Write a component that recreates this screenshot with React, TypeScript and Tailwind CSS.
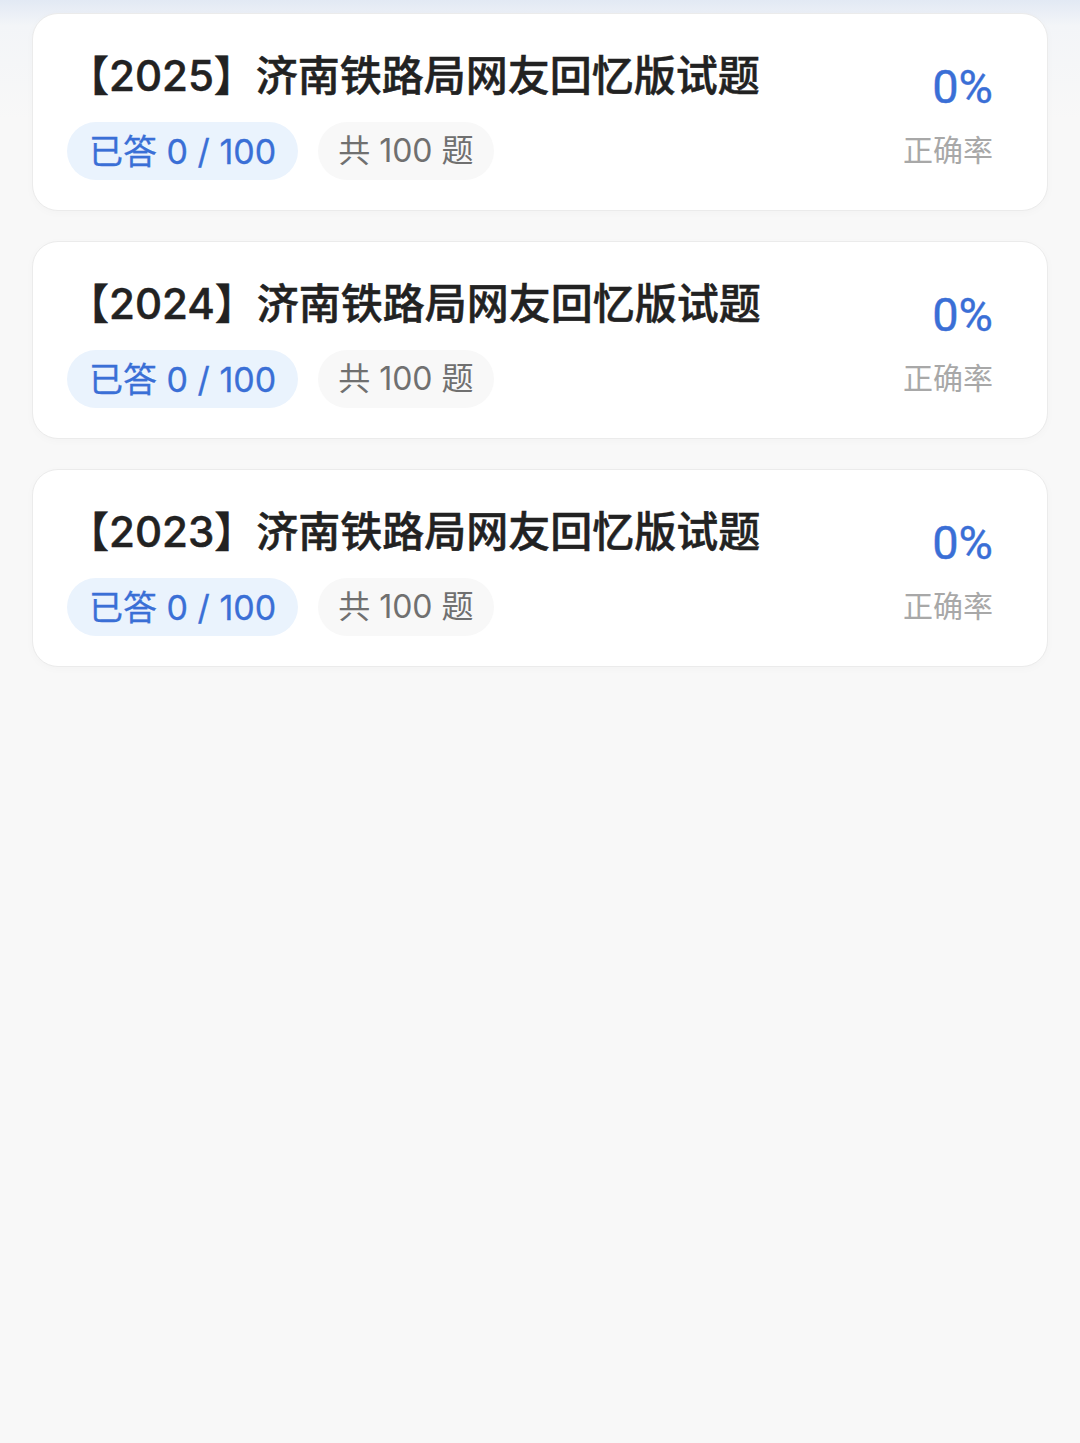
import React from "react";

const FONT = "font-['Inter','Noto_Sans_CJK_SC',sans-serif]";

const items = [
  { year: "2025", done: 0, total: 100, rate: "0%" },
  { year: "2024", done: 0, total: 100, rate: "0%" },
  { year: "2023", done: 0, total: 100, rate: "0%" },
];

function Card({ year, done, total, rate }: { year: string; done: number; total: number; rate: string }) {
  return (
    <div className="flex items-center justify-between rounded-[26px] border border-[#ebebeb] bg-white pl-[34px] pr-[54px] pt-[34px] pb-[30px] shadow-[0_2px_8px_rgba(0,0,0,0.025)]">
      <div className="flex flex-col">
        <div className="text-[42px] leading-[56px] font-medium text-[#222222] whitespace-nowrap [-webkit-text-stroke:0.5px_#222222]">
          【{year}】济南铁路局网友回忆版试题
        </div>
        <div className="mt-[18px] flex items-center gap-[20px]">
          <div className="flex h-[58px] items-center rounded-full bg-[#eaf3fd] px-[22px] text-[34px] text-[#3a6fd6] whitespace-nowrap [-webkit-text-stroke:0.3px_#3a6fd6]">
            已答 {done} / {total}
          </div>
          <div className="flex h-[58px] items-center rounded-full bg-[#f8f8f8] px-[20px] text-[32px] text-[#707070] whitespace-nowrap">
            共 {total} 题
          </div>
        </div>
      </div>
      <div className="flex flex-col items-end">
        <div className="font-['Roboto',sans-serif] text-[47px] leading-[56px] font-normal text-[#3a6fd6] [-webkit-text-stroke:0.4px_#3a6fd6]">{rate}</div>
        <div className="mt-[15px] text-[30px] leading-[40px] text-[#a8a8a8]">正确率</div>
      </div>
    </div>
  );
}

export default function App() {
  return (
    <div
      className={`${FONT} h-[1443px] w-full bg-[linear-gradient(to_bottom,#e2e9f4_0px,#f3f5f8_26px,#f8f8f8_120px,#f8f8f8_100%)] px-[32px] pt-[13px]`}
    >
      <div className="flex flex-col gap-[30px]">
        {items.map((it) => (
          <Card key={it.year} {...it} />
        ))}
      </div>
    </div>
  );
}
